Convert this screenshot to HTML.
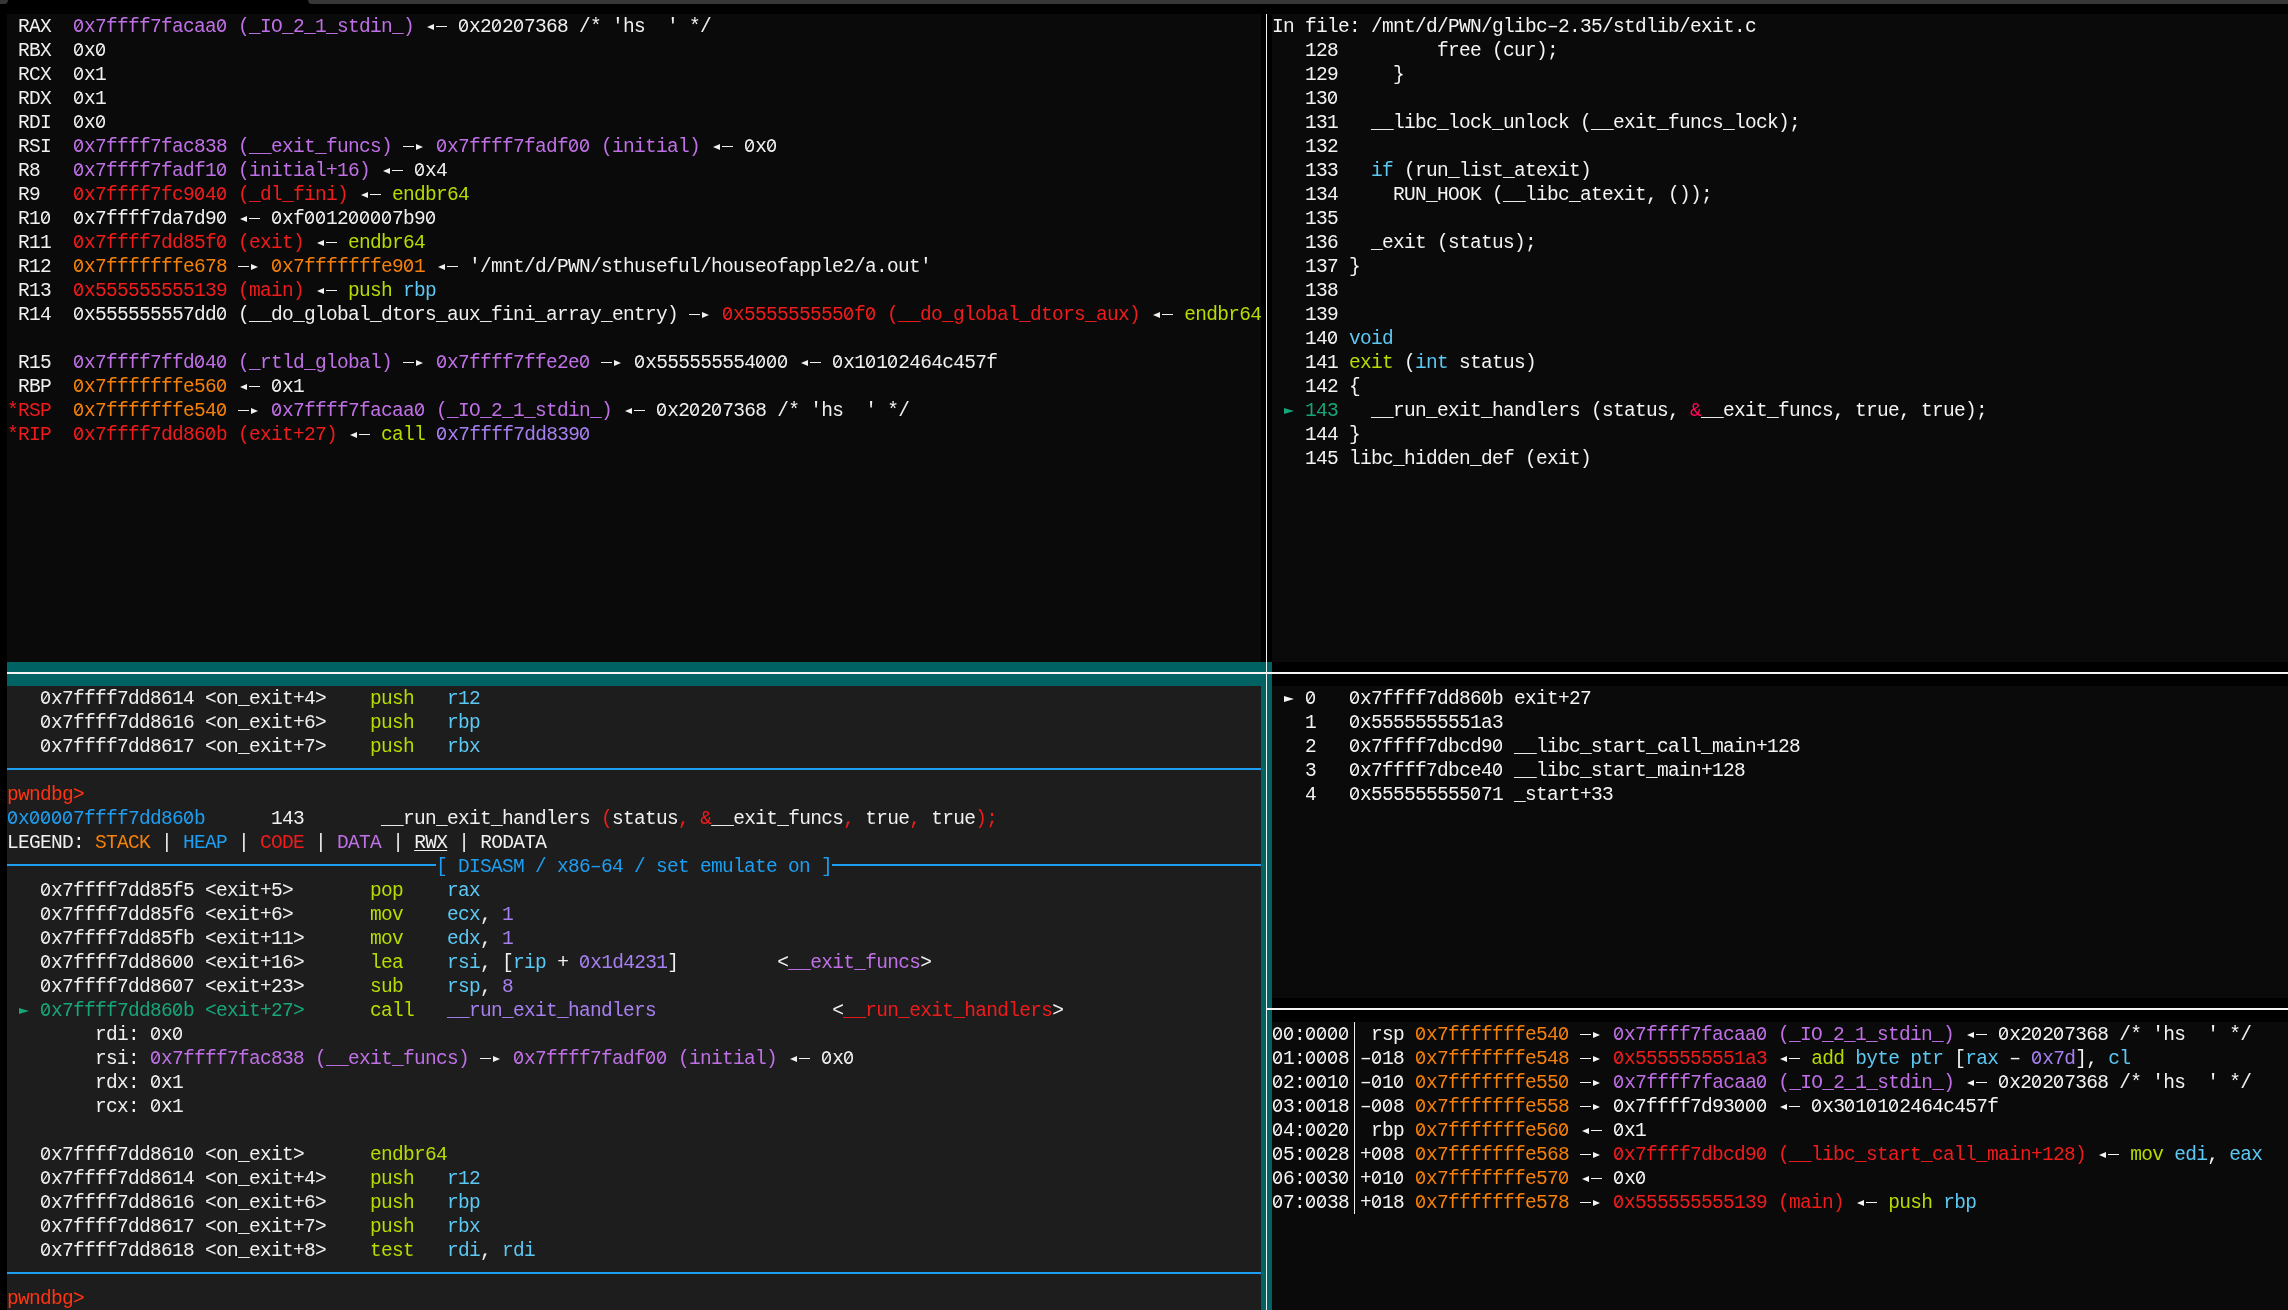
<!DOCTYPE html>
<html><head><meta charset="utf-8"><style>
html,body{margin:0;padding:0;background:#000;width:2288px;height:1310px;overflow:hidden;position:relative}
.bx{position:absolute}
.ln{will-change:transform;position:absolute;height:24px;line-height:24px;white-space:pre;font-family:"Liberation Mono",monospace;font-size:19.5px;letter-spacing:-0.7019px;padding-top:0.0px;box-sizing:border-box}
.w{color:#f0f0f0}
.W{color:#f4f4f4}
.R{color:#ff3412}
.p{color:#c070e6}
.r{color:#f01c1c}
.o{color:#f5800a}
.y{color:#b8dc00}
.c{color:#5cc8f4}
.l{color:#a67ff0}
.b{color:#1e9ef0}
.g{color:#17a57a}
.k{color:#ff0a5a}
.u{text-decoration:underline;text-underline-offset:2px}
i{display:inline-block;width:11px;height:24px;vertical-align:top;position:relative;font-style:normal;margin-top:-0.0px}
i.tl::before{content:"";position:absolute;left:1.5px;top:9px;border-right:7px solid currentColor;border-top:3.5px solid transparent;border-bottom:3.5px solid transparent}
i.tr::before{content:"";position:absolute;left:2px;top:9px;border-left:7px solid currentColor;border-top:3.5px solid transparent;border-bottom:3.5px solid transparent}
i.ds::before{content:"";position:absolute;left:0;right:0;top:10.5px;height:1.6px;background:currentColor}
i.z::before{content:"";position:absolute;left:1px;top:4px;width:9px;height:13px;box-shadow:inset 0 0 0 1.7px currentColor;border-radius:4.5px/5.5px}
i.z::after{content:"";position:absolute;left:4.7px;top:5.8px;width:1.45px;height:9px;background:currentColor;transform:rotate(34deg)}
i.pt::before{content:"";position:absolute;left:0.5px;top:8.6px;border-left:10.5px solid currentColor;border-top:3.8px solid transparent;border-bottom:3.8px solid transparent}
</style></head><body>
<div class="bx" style="left:0;top:0;width:8px;height:4px;background:#363636;border-radius:0 0 4px 0"></div>
<div class="bx" style="left:308px;top:0;width:1980px;height:4px;background:#363636;border-radius:0 0 0 6px"></div>
<div class="bx" style="left:7px;top:14px;width:1254px;height:648px;background:#0a0a0a"></div>
<div class="bx" style="left:1272px;top:14px;width:1016px;height:648px;background:#0a0a0a"></div>
<div class="bx" style="left:1266px;top:14px;width:1px;height:1296px;background:#f0f0f0"></div>
<div class="bx" style="left:7px;top:662px;width:1265px;height:24px;background:#006262"></div>
<div class="bx" style="left:1261px;top:662px;width:11px;height:648px;background:#006262"></div>
<div class="bx" style="left:7px;top:686px;width:1254px;height:624px;background:#1d1d1d"></div>
<div class="bx" style="left:7px;top:672px;width:2281px;height:2px;background:#f4f4f4"></div>
<div class="bx" style="left:1266px;top:662px;width:1px;height:648px;background:#f0f0f0"></div>
<div class="bx" style="left:1272px;top:686px;width:1016px;height:312px;background:#0a0a0a"></div>
<div class="bx" style="left:1266px;top:1008px;width:1022px;height:2px;background:#f4f4f4"></div>
<div class="bx" style="left:1272px;top:1022px;width:1016px;height:288px;background:#0a0a0a"></div>
<div class="bx" style="left:7px;top:768px;width:1254px;height:2px;background:#1e9ef0"></div>
<div class="bx" style="left:7px;top:864px;width:429px;height:2px;background:#1e9ef0"></div>
<div class="bx" style="left:832px;top:864px;width:429px;height:2px;background:#1e9ef0"></div>
<div class="bx" style="left:7px;top:1272px;width:1254px;height:2px;background:#1e9ef0"></div>
<div class="bx" style="left:1354px;top:1022px;width:1px;height:192px;background:#f0f0f0"></div>
<div class="ln w" style="left:7px;top:15px"> RAX  <span class="p"><i class="z"></i>x7ffff7facaa<i class="z"></i> (_IO_2_1_stdin_)</span> <i class="tl"></i><i class="ds"></i> <i class="z"></i>x2<i class="z"></i>2<i class="z"></i>7368 /* &#x27;hs  &#x27; */</div>
<div class="ln w" style="left:7px;top:39px"> RBX  <i class="z"></i>x<i class="z"></i></div>
<div class="ln w" style="left:7px;top:63px"> RCX  <i class="z"></i>x1</div>
<div class="ln w" style="left:7px;top:87px"> RDX  <i class="z"></i>x1</div>
<div class="ln w" style="left:7px;top:111px"> RDI  <i class="z"></i>x<i class="z"></i></div>
<div class="ln w" style="left:7px;top:135px"> RSI  <span class="p"><i class="z"></i>x7ffff7fac838 (__exit_funcs)</span> <i class="ds"></i><i class="tr"></i> <span class="p"><i class="z"></i>x7ffff7fadf<i class="z"></i><i class="z"></i> (initial)</span> <i class="tl"></i><i class="ds"></i> <i class="z"></i>x<i class="z"></i></div>
<div class="ln w" style="left:7px;top:159px"> R8   <span class="p"><i class="z"></i>x7ffff7fadf1<i class="z"></i> (initial+16)</span> <i class="tl"></i><i class="ds"></i> <i class="z"></i>x4</div>
<div class="ln w" style="left:7px;top:183px"> R9   <span class="r"><i class="z"></i>x7ffff7fc9<i class="z"></i>4<i class="z"></i> (_dl_fini)</span> <i class="tl"></i><i class="ds"></i> <span class="y">endbr64</span></div>
<div class="ln w" style="left:7px;top:207px"> R1<i class="z"></i>  <i class="z"></i>x7ffff7da7d9<i class="z"></i> <i class="tl"></i><i class="ds"></i> <i class="z"></i>xf<i class="z"></i><i class="z"></i>12<i class="z"></i><i class="z"></i><i class="z"></i><i class="z"></i>7b9<i class="z"></i></div>
<div class="ln w" style="left:7px;top:231px"> R11  <span class="r"><i class="z"></i>x7ffff7dd85f<i class="z"></i> (exit)</span> <i class="tl"></i><i class="ds"></i> <span class="y">endbr64</span></div>
<div class="ln w" style="left:7px;top:255px"> R12  <span class="o"><i class="z"></i>x7fffffffe678</span> <i class="ds"></i><i class="tr"></i> <span class="o"><i class="z"></i>x7fffffffe9<i class="z"></i>1</span> <i class="tl"></i><i class="ds"></i> &#x27;/mnt/d/PWN/sthuseful/houseofapple2/a.out&#x27;</div>
<div class="ln w" style="left:7px;top:279px"> R13  <span class="r"><i class="z"></i>x555555555139 (main)</span> <i class="tl"></i><i class="ds"></i> <span class="y">push</span> <span class="c">rbp</span></div>
<div class="ln w" style="left:7px;top:303px"> R14  <i class="z"></i>x555555557dd<i class="z"></i> (__do_global_dtors_aux_fini_array_entry) <i class="ds"></i><i class="tr"></i> <span class="r"><i class="z"></i>x555555555<i class="z"></i>f<i class="z"></i> (__do_global_dtors_aux)</span> <i class="tl"></i><i class="ds"></i> <span class="y">endbr64</span></div>
<div class="ln w" style="left:7px;top:351px"> R15  <span class="p"><i class="z"></i>x7ffff7ffd<i class="z"></i>4<i class="z"></i> (_rtld_global)</span> <i class="ds"></i><i class="tr"></i> <span class="p"><i class="z"></i>x7ffff7ffe2e<i class="z"></i></span> <i class="ds"></i><i class="tr"></i> <i class="z"></i>x555555554<i class="z"></i><i class="z"></i><i class="z"></i> <i class="tl"></i><i class="ds"></i> <i class="z"></i>x1<i class="z"></i>1<i class="z"></i>2464c457f</div>
<div class="ln w" style="left:7px;top:375px"> RBP  <span class="o"><i class="z"></i>x7fffffffe56<i class="z"></i></span> <i class="tl"></i><i class="ds"></i> <i class="z"></i>x1</div>
<div class="ln w" style="left:7px;top:399px"><span class="r">*RSP</span>  <span class="o"><i class="z"></i>x7fffffffe54<i class="z"></i></span> <i class="ds"></i><i class="tr"></i> <span class="p"><i class="z"></i>x7ffff7facaa<i class="z"></i> (_IO_2_1_stdin_)</span> <i class="tl"></i><i class="ds"></i> <i class="z"></i>x2<i class="z"></i>2<i class="z"></i>7368 /* &#x27;hs  &#x27; */</div>
<div class="ln w" style="left:7px;top:423px"><span class="r">*RIP</span>  <span class="r"><i class="z"></i>x7ffff7dd86<i class="z"></i>b (exit+27)</span> <i class="tl"></i><i class="ds"></i> <span class="y">call</span> <span class="l"><i class="z"></i>x7ffff7dd839<i class="z"></i></span></div>
<div class="ln W" style="left:1272px;top:15px">In file: /mnt/d/PWN/glibc&#8211;2.35/stdlib/exit.c</div>
<div class="ln W" style="left:1272px;top:39px">   128         free (cur);</div>
<div class="ln W" style="left:1272px;top:63px">   129     }</div>
<div class="ln W" style="left:1272px;top:87px">   13<i class="z"></i></div>
<div class="ln W" style="left:1272px;top:111px">   131   __libc_lock_unlock (__exit_funcs_lock);</div>
<div class="ln W" style="left:1272px;top:135px">   132</div>
<div class="ln W" style="left:1272px;top:159px">   133   <span class="c">if</span> (run_list_atexit)</div>
<div class="ln W" style="left:1272px;top:183px">   134     RUN_HOOK (__libc_atexit, ());</div>
<div class="ln W" style="left:1272px;top:207px">   135</div>
<div class="ln W" style="left:1272px;top:231px">   136   _exit (status);</div>
<div class="ln W" style="left:1272px;top:255px">   137 }</div>
<div class="ln W" style="left:1272px;top:279px">   138</div>
<div class="ln W" style="left:1272px;top:303px">   139</div>
<div class="ln W" style="left:1272px;top:327px">   14<i class="z"></i> <span class="c">void</span></div>
<div class="ln W" style="left:1272px;top:351px">   141 <span class="y">exit</span> (<span class="c">int</span> status)</div>
<div class="ln W" style="left:1272px;top:375px">   142 {</div>
<div class="ln W" style="left:1272px;top:399px"> <span class="g"><i class="pt"></i> 143</span>   __run_exit_handlers (status, <span class="k">&amp;</span>__exit_funcs, true, true);</div>
<div class="ln W" style="left:1272px;top:423px">   144 }</div>
<div class="ln W" style="left:1272px;top:447px">   145 libc_hidden_def (exit)</div>
<div class="ln W" style="left:1272px;top:687px"> <i class="pt"></i> <i class="z"></i>   <i class="z"></i>x7ffff7dd86<i class="z"></i>b exit+27</div>
<div class="ln W" style="left:1272px;top:711px">   1   <i class="z"></i>x5555555551a3</div>
<div class="ln W" style="left:1272px;top:735px">   2   <i class="z"></i>x7ffff7dbcd9<i class="z"></i> __libc_start_call_main+128</div>
<div class="ln W" style="left:1272px;top:759px">   3   <i class="z"></i>x7ffff7dbce4<i class="z"></i> __libc_start_main+128</div>
<div class="ln W" style="left:1272px;top:783px">   4   <i class="z"></i>x555555555<i class="z"></i>71 _start+33</div>
<div class="ln W" style="left:1272px;top:1023px"><i class="z"></i><i class="z"></i>:<i class="z"></i><i class="z"></i><i class="z"></i><i class="z"></i>  rsp <span class="o"><i class="z"></i>x7fffffffe54<i class="z"></i></span> <i class="ds"></i><i class="tr"></i> <span class="p"><i class="z"></i>x7ffff7facaa<i class="z"></i> (_IO_2_1_stdin_)</span> <i class="tl"></i><i class="ds"></i> <i class="z"></i>x2<i class="z"></i>2<i class="z"></i>7368 /* &#x27;hs  &#x27; */</div>
<div class="ln W" style="left:1272px;top:1047px"><i class="z"></i>1:<i class="z"></i><i class="z"></i><i class="z"></i>8 &#8211;<i class="z"></i>18 <span class="o"><i class="z"></i>x7fffffffe548</span> <i class="ds"></i><i class="tr"></i> <span class="r"><i class="z"></i>x5555555551a3</span> <i class="tl"></i><i class="ds"></i> <span class="y">add</span> <span class="c">byte ptr</span> [<span class="c">rax</span> &#8211; <span class="l"><i class="z"></i>x7d</span>], <span class="c">cl</span></div>
<div class="ln W" style="left:1272px;top:1071px"><i class="z"></i>2:<i class="z"></i><i class="z"></i>1<i class="z"></i> &#8211;<i class="z"></i>1<i class="z"></i> <span class="o"><i class="z"></i>x7fffffffe55<i class="z"></i></span> <i class="ds"></i><i class="tr"></i> <span class="p"><i class="z"></i>x7ffff7facaa<i class="z"></i> (_IO_2_1_stdin_)</span> <i class="tl"></i><i class="ds"></i> <i class="z"></i>x2<i class="z"></i>2<i class="z"></i>7368 /* &#x27;hs  &#x27; */</div>
<div class="ln W" style="left:1272px;top:1095px"><i class="z"></i>3:<i class="z"></i><i class="z"></i>18 &#8211;<i class="z"></i><i class="z"></i>8 <span class="o"><i class="z"></i>x7fffffffe558</span> <i class="ds"></i><i class="tr"></i> <i class="z"></i>x7ffff7d93<i class="z"></i><i class="z"></i><i class="z"></i> <i class="tl"></i><i class="ds"></i> <i class="z"></i>x3<i class="z"></i>1<i class="z"></i>1<i class="z"></i>2464c457f</div>
<div class="ln W" style="left:1272px;top:1119px"><i class="z"></i>4:<i class="z"></i><i class="z"></i>2<i class="z"></i>  rbp <span class="o"><i class="z"></i>x7fffffffe56<i class="z"></i></span> <i class="tl"></i><i class="ds"></i> <i class="z"></i>x1</div>
<div class="ln W" style="left:1272px;top:1143px"><i class="z"></i>5:<i class="z"></i><i class="z"></i>28 +<i class="z"></i><i class="z"></i>8 <span class="o"><i class="z"></i>x7fffffffe568</span> <i class="ds"></i><i class="tr"></i> <span class="r"><i class="z"></i>x7ffff7dbcd9<i class="z"></i> (__libc_start_call_main+128)</span> <i class="tl"></i><i class="ds"></i> <span class="y">mov</span> <span class="c">edi</span>, <span class="c">eax</span></div>
<div class="ln W" style="left:1272px;top:1167px"><i class="z"></i>6:<i class="z"></i><i class="z"></i>3<i class="z"></i> +<i class="z"></i>1<i class="z"></i> <span class="o"><i class="z"></i>x7fffffffe57<i class="z"></i></span> <i class="tl"></i><i class="ds"></i> <i class="z"></i>x<i class="z"></i></div>
<div class="ln W" style="left:1272px;top:1191px"><i class="z"></i>7:<i class="z"></i><i class="z"></i>38 +<i class="z"></i>18 <span class="o"><i class="z"></i>x7fffffffe578</span> <i class="ds"></i><i class="tr"></i> <span class="r"><i class="z"></i>x555555555139 (main)</span> <i class="tl"></i><i class="ds"></i> <span class="y">push</span> <span class="c">rbp</span></div>
<div class="ln w" style="left:7px;top:687px">   <i class="z"></i>x7ffff7dd8614 &lt;on_exit+4&gt;    <span class="y">push</span>   <span class="c">r12</span></div>
<div class="ln w" style="left:7px;top:711px">   <i class="z"></i>x7ffff7dd8616 &lt;on_exit+6&gt;    <span class="y">push</span>   <span class="c">rbp</span></div>
<div class="ln w" style="left:7px;top:735px">   <i class="z"></i>x7ffff7dd8617 &lt;on_exit+7&gt;    <span class="y">push</span>   <span class="c">rbx</span></div>
<div class="ln w" style="left:7px;top:783px"><span class="R">pwndbg&gt;</span></div>
<div class="ln w" style="left:7px;top:807px"><span class="b"><i class="z"></i>x<i class="z"></i><i class="z"></i><i class="z"></i><i class="z"></i>7ffff7dd86<i class="z"></i>b</span>      143       __run_exit_handlers <span class="r">(</span>status<span class="r">,</span> <span class="r">&amp;</span>__exit_funcs<span class="r">,</span> true<span class="r">,</span> true<span class="r">);</span></div>
<div class="ln w" style="left:7px;top:831px">LEGEND: <span class="o">STACK</span> | <span class="b">HEAP</span> | <span class="r">CODE</span> | <span class="p">DATA</span> | <span class="u">RWX</span> | RODATA</div>
<div class="ln w" style="left:7px;top:855px">                                       <span class="b">[ DISASM / x86&#8211;64 / set emulate on ]</span></div>
<div class="ln w" style="left:7px;top:879px">   <i class="z"></i>x7ffff7dd85f5 &lt;exit+5&gt;       <span class="y">pop</span>    <span class="c">rax</span></div>
<div class="ln w" style="left:7px;top:903px">   <i class="z"></i>x7ffff7dd85f6 &lt;exit+6&gt;       <span class="y">mov</span>    <span class="c">ecx</span>, <span class="l">1</span></div>
<div class="ln w" style="left:7px;top:927px">   <i class="z"></i>x7ffff7dd85fb &lt;exit+11&gt;      <span class="y">mov</span>    <span class="c">edx</span>, <span class="l">1</span></div>
<div class="ln w" style="left:7px;top:951px">   <i class="z"></i>x7ffff7dd86<i class="z"></i><i class="z"></i> &lt;exit+16&gt;      <span class="y">lea</span>    <span class="c">rsi</span>, [<span class="c">rip</span> + <span class="l"><i class="z"></i>x1d4231</span>]         &lt;<span class="p">__exit_funcs</span>&gt;</div>
<div class="ln w" style="left:7px;top:975px">   <i class="z"></i>x7ffff7dd86<i class="z"></i>7 &lt;exit+23&gt;      <span class="y">sub</span>    <span class="c">rsp</span>, <span class="l">8</span></div>
<div class="ln w" style="left:7px;top:999px"> <span class="g"><i class="pt"></i> <i class="z"></i>x7ffff7dd86<i class="z"></i>b &lt;exit+27&gt;</span>      <span class="y">call</span>   <span class="l">__run_exit_handlers</span>                &lt;<span class="r">__run_exit_handlers</span>&gt;</div>
<div class="ln w" style="left:7px;top:1023px">        rdi: <i class="z"></i>x<i class="z"></i></div>
<div class="ln w" style="left:7px;top:1047px">        rsi: <span class="p"><i class="z"></i>x7ffff7fac838 (__exit_funcs)</span> <i class="ds"></i><i class="tr"></i> <span class="p"><i class="z"></i>x7ffff7fadf<i class="z"></i><i class="z"></i> (initial)</span> <i class="tl"></i><i class="ds"></i> <i class="z"></i>x<i class="z"></i></div>
<div class="ln w" style="left:7px;top:1071px">        rdx: <i class="z"></i>x1</div>
<div class="ln w" style="left:7px;top:1095px">        rcx: <i class="z"></i>x1</div>
<div class="ln w" style="left:7px;top:1143px">   <i class="z"></i>x7ffff7dd861<i class="z"></i> &lt;on_exit&gt;      <span class="y">endbr64</span></div>
<div class="ln w" style="left:7px;top:1167px">   <i class="z"></i>x7ffff7dd8614 &lt;on_exit+4&gt;    <span class="y">push</span>   <span class="c">r12</span></div>
<div class="ln w" style="left:7px;top:1191px">   <i class="z"></i>x7ffff7dd8616 &lt;on_exit+6&gt;    <span class="y">push</span>   <span class="c">rbp</span></div>
<div class="ln w" style="left:7px;top:1215px">   <i class="z"></i>x7ffff7dd8617 &lt;on_exit+7&gt;    <span class="y">push</span>   <span class="c">rbx</span></div>
<div class="ln w" style="left:7px;top:1239px">   <i class="z"></i>x7ffff7dd8618 &lt;on_exit+8&gt;    <span class="y">test</span>   <span class="c">rdi</span>, <span class="c">rdi</span></div>
<div class="ln w" style="left:7px;top:1287px"><span class="R">pwndbg&gt;</span></div>
</body></html>
